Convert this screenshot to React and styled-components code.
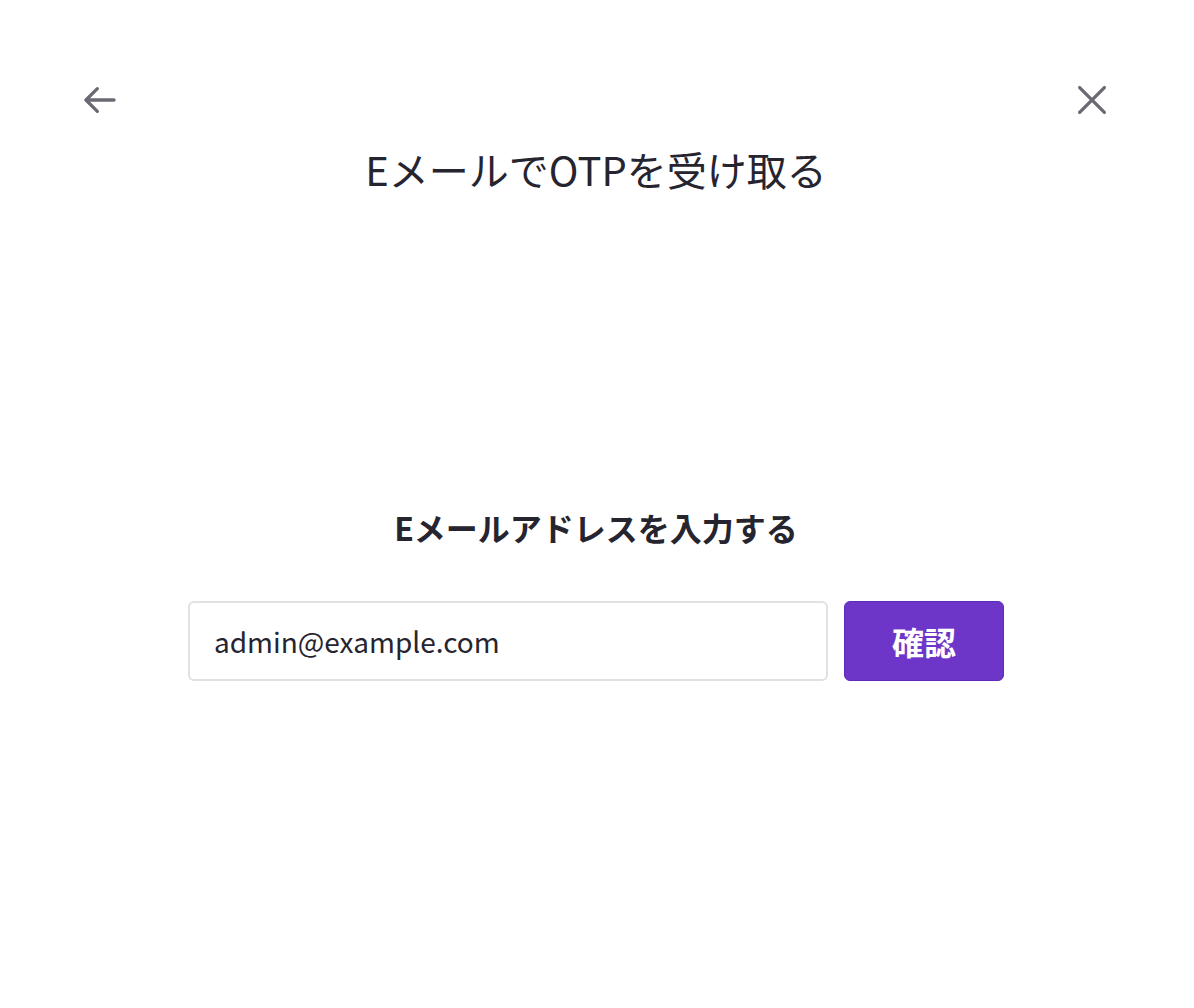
import React, {useState} from 'react';
import styled, {createGlobalStyle} from 'styled-components';

const GlobalStyle = createGlobalStyle`
    html, body {
        margin: 0;
        padding: 0;
        background: #ffffff;
    }
    body {
        font-family: "Noto Sans CJK JP", "Noto Sans", sans-serif;
        color: #26242f;
    }
`;

const Page = styled.div`
    width: 1194px;
    height: 1008px;
    box-sizing: border-box;
    padding: 76px 78px 0 76px;
    display: flex;
    flex-direction: column;
`;

const TopBar = styled.div`
    display: grid;
    grid-template-columns: 48px 1fr 48px;
    align-items: start;
`;

const IconButton = styled.button`
    width: 48px;
    height: 48px;
    padding: 0;
    border: none;
    background: none;
    color: #6b6a74;
    display: flex;
    align-items: center;
    justify-content: center;
    cursor: pointer;
`;

const Title = styled.h1`
    margin: 65px 0 0 0;
    text-align: center;
    font-size: 40px;
    font-weight: 400;
    line-height: 56px;
    color: #26242f;
`;

const Form = styled.form`
    margin-top: 308px;
    display: flex;
    flex-direction: column;
    align-items: center;
`;

const Label = styled.label`
    font-size: 32px;
    font-weight: 700;
    color: #26242f;
    line-height: 45px;
`;

const Row = styled.div`
    margin-top: 51px;
    display: flex;
    gap: 16px;
`;

const EmailInput = styled.input`
    width: 640px;
    height: 80px;
    box-sizing: border-box;
    padding: 0 24px;
    border: 2px solid #e1e1e3;
    border-radius: 6px;
    font-family: inherit;
    font-size: 28px;
    color: #26242f;
    outline: none;
`;

const SubmitButton = styled.button`
    width: 160px;
    height: 80px;
    border: 1px solid #5e2bb8;
    border-radius: 6px;
    background: #6e35c9;
    color: #ffffff;
    font-family: inherit;
    font-size: 32px;
    font-weight: 700;
    cursor: pointer;
`;

const BackIcon = () => (
    <svg width="44" height="44" viewBox="0 0 24 24" fill="none" stroke="currentColor" strokeWidth="1.8" strokeLinecap="round" strokeLinejoin="round">
        <path d="M19.65 12H4.5" />
        <path d="M10.55 5.8L4.35 12l6.2 6.2" />
    </svg>
);

const CloseIcon = () => (
    <svg width="44" height="44" viewBox="0 0 24 24" fill="none" stroke="currentColor" strokeWidth="1.8" strokeLinecap="round">
        <path d="M5.25 5.25l13.5 13.5" />
        <path d="M18.75 5.25L5.25 18.75" />
    </svg>
);

const App = () => {
    const [email, setEmail] = useState("admin@example.com");

    return (
        <>
            <GlobalStyle />
            <Page>
                <TopBar>
                    <IconButton aria-label="back"><BackIcon /></IconButton>
                    <Title>EメールでOTPを受け取る</Title>
                    <IconButton aria-label="close"><CloseIcon /></IconButton>
                </TopBar>
                <Form onSubmit={e => e.preventDefault()}>
                    <Label htmlFor="email">Eメールアドレスを入力する</Label>
                    <Row>
                        <EmailInput id="email" value={email} onChange={e => setEmail(e.target.value)} />
                        <SubmitButton type="submit">確認</SubmitButton>
                    </Row>
                </Form>
            </Page>
        </>
    );
};

export default App;
